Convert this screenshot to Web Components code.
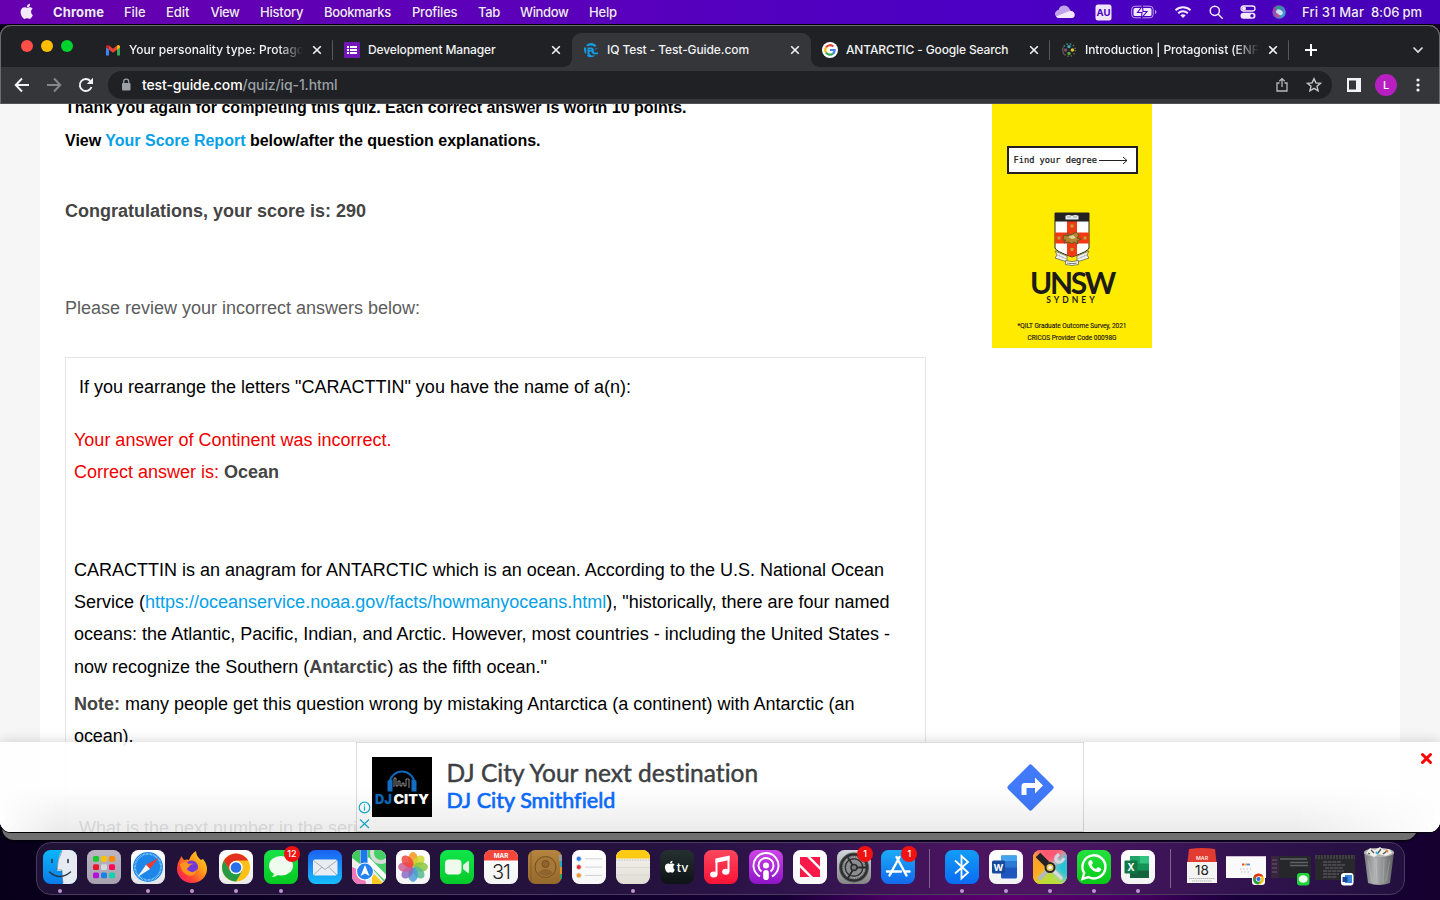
<!DOCTYPE html>
<html lang="en"><head><meta charset="utf-8"><title>IQ Test - Test-Guide.com</title>
<style>html,body{margin:0;width:1440px;height:900px;overflow:hidden;background:#12002b}</style></head>
<body><mac-desktop></mac-desktop>
<script>
function part(name, css, html) {
  customElements.define(name, class extends HTMLElement {
    connectedCallback() {
      if (this.shadowRoot) return;
      this.attachShadow({mode: 'open'}).innerHTML = '<style>*{box-sizing:border-box}' + css + '</style>' + (typeof html === 'function' ? html(this) : html);
    }
  });
}
const apple = 'M13.3 10.6c0-1.7 1.4-2.5 1.5-2.6-.8-1.2-2.1-1.4-2.5-1.4-1.1-.1-2.1.6-2.6.6-.6 0-1.4-.6-2.3-.6C5.200 6.600 3.500 8.100 3.500 11c0 3.100 2.200 6.400 3.900 6.400.8 0 1.200-.5 2.200-.5s1.300.5 2.200.5c1.500 0 2.900-2.700 3.200-3.700-.1 0-1.700-.8-1.700-3.100zM11.700 5.500c.5-.6.8-1.500.7-2.400-.8 0-1.700.5-2.200 1.100-.5.600-.9 1.400-.8 2.300.9.100 1.800-.4 2.300-1z';

part('mac-desktop', `
:host{display:flex;flex-direction:column;position:relative;width:1440px;height:900px;overflow:hidden;
 background:radial-gradient(ellipse 230px 60px at 1010px 900px,#5d006e 0,#4a0063 50%,transparent 100%),linear-gradient(90deg,#08001a 0,#12002f 45%,#1b0040 75%,#150030 100%)}
.behind{position:absolute;left:2px;top:800px;width:1415px;height:40px;border-radius:0 0 12px 12px;background:#6f6f6f;box-shadow:0 1px 3px #000}
menu-bar,browser-window{position:relative}
dock-bar{margin:10px 0 0 36px;position:relative}`,
`<div class="behind"></div><menu-bar></menu-bar><browser-window></browser-window><dock-bar></dock-bar>`);

part('menu-bar', `
:host{display:flex;height:25px;align-items:center;background:linear-gradient(90deg,#6700ae 0,#5b00bb 38%,#4b00c3 68%,#4700b9 100%);border-bottom:1px solid #140028;color:#f3e9fb;font:500 13px/24px Inter,sans-serif;text-shadow:0 1px 2px #0004}
.m{display:flex;margin-left:20px;flex:1}.m b{font-weight:700}svg{display:block}
.g{width:33px;height:24px}
.r{display:flex;align-items:center}`,
`<div class="m"><span class="g"><svg width="16" height="20" viewBox="2 1 15 18" style="margin:1px 0 0 -1px"><path fill="#f3e9fb" d="${apple}"/></svg></span>
<span style="width:71px"><b><fit-text w="51">Chrome</fit-text></b></span><span style="width:42px"><fit-text w="21.500">File</fit-text></span><span style="width:44.500px"><fit-text w="23.500">Edit</fit-text></span><span style="width:49.500px"><fit-text w="29">View</fit-text></span><span style="width:64px"><fit-text w="43.500">History</fit-text></span><span style="width:88px"><fit-text w="67">Bookmarks</fit-text></span><span style="width:66px"><fit-text w="45.500">Profiles</fit-text></span><span style="width:42px"><fit-text w="22">Tab</fit-text></span><span style="width:69px"><fit-text w="48.500">Window</fit-text></span><fit-text w="28">Help</fit-text></div>
<div class="r">
<svg width="20" height="14" viewBox="0 0 20 14"><path fill="#c0a3ea" d="M0 9.500A4 4 0 0 1 3.500 5 5.800 5.800 0 0 1 14.500 4L16 6 3 12.500A4 4 0 0 1 0 9.500z"/><path fill="#f3e9fb" d="M1 11.500L12 7q2-1.500 4-1a4 4 0 0 1 3.700 4A3 3 0 0 1 17 13H4q-2 0-3-1.500z"/></svg>
<svg width="17" height="17" viewBox="0 0 17 17" style="margin:0 18.500px 0 20.500px"><rect x=".5" y=".5" width="16" height="16" rx="2.500" fill="#f0e5fb"/><text x="8.500" y="12.300" font-size="9.500" font-weight="700" fill="#4b00be" text-anchor="middle" style="text-shadow:none">AU</text></svg>
<svg width="26" height="14" viewBox="0 0 26 14"><rect x=".7" y="1.200" width="21.500" height="11.600" rx="3.200" fill="none" stroke="#bd9fe8"/><path d="M24 5v4q1.500-.5 1.500-2T24 5" fill="#bd9fe8"/><rect x="2.500" y="3" width="18" height="8" rx="1.500" fill="#f3e9fb"/><path d="M11.500 1L6.500 7.500h4.500L10.500 13l5.500-6.500h-4z" fill="#f3e9fb" stroke="#4b00be" stroke-width="1.100"/></svg>
<svg width="18" height="14" viewBox="0 0 18 14" style="margin-left:17px"><g fill="none" stroke="#f3e9fb" stroke-width="2"><path d="M1.500 5.200a11 11 0 0 1 15 0M4.200 8.200a7 7 0 0 1 9.600 0"/></g><path fill="#f3e9fb" d="M6.300 10.200q2.700-2 5.400 0L9 13z"/></svg>
<svg width="14" height="14" viewBox="0 0 14 14" style="margin-left:17.500px"><g fill="none" stroke="#f3e9fb" stroke-width="1.500"><circle cx="5.800" cy="5.800" r="4.600"/><path d="M9.200 9.200l4 4" stroke-linecap="round"/></g></svg>
<svg width="16" height="14" viewBox="0 0 16 14" style="margin-left:17px"><rect x="1" y="1" width="14" height="5" rx="2.500" fill="none" stroke="#f3e9fb" stroke-width="1.300"/><circle cx="4" cy="3.500" r="2" fill="#f3e9fb"/><rect x=".5" y="7.700" width="15" height="6" rx="3" fill="#f3e9fb"/><circle cx="12" cy="10.700" r="1.700" fill="#4b00be"/></svg>
<svg width="14" height="14" viewBox="0 0 14 14" style="margin:0 16px 0 16px"><defs><linearGradient id="s" x1="0" y1=".1" x2="1" y2=".9"><stop stop-color="#c23a86"/><stop offset=".45" stop-color="#6a5fc4"/><stop offset="1" stop-color="#25c4d8"/></linearGradient></defs><circle cx="7" cy="7" r="6.700" fill="url(#s)"/><path d="M3 2q5-2.500 8.500 1.500-4 0-5 3z" fill="#17a98c" opacity=".85"/><ellipse cx="7.500" cy="7" rx="3.500" ry="2.600" fill="#e8fffb" opacity=".8" transform="rotate(30 7 7)"/><path d="M2 9.500q3 4 7 3l-3-4z" fill="#e0447a" opacity=".7"/></svg>
<span style="width:69px"><fit-text w="62">Fri 31 Mar</fit-text></span><span style="width:69px"><fit-text w="51">8:06 pm</fit-text></span></div>`);

part('browser-window', `
:host{display:flex;flex-direction:column;height:807px;border-radius:11px;overflow:hidden;background:#fff;box-shadow:0 0 0 1px #000}
.content{height:728px;position:relative;overflow:hidden}
.edge{position:absolute;inset:0;border:1px solid #6b6b70;border-bottom:0;border-radius:11px 11px 0 0;height:79px;pointer-events:none}`,
`<tab-strip></tab-strip><tool-bar></tool-bar><div class="content"><quiz-page></quiz-page><anchor-ad></anchor-ad></div><div class="edge"></div>`);

part('tab-strip', `
:host{display:flex;height:42px;background:#202124;padding-top:8px}
.lights{display:flex;gap:8px;width:94px;padding:7px 0 0 21px}.lights i{width:12px;height:12px;border-radius:50%}
.plus{width:44px;display:flex;justify-content:center;align-items:center}.sp{flex:1}.chev{padding:12px 16px 0 0}svg{display:block}`,
`<div class="lights"><i style="background:#ff4f48"></i><i style="background:#ffbe00"></i><i style="background:#00d32d"></i></div>
<browser-tab label="Your personality type: Protagonist" w="196" fade line><svg width="16" height="16" viewBox="0 0 16 16"><path fill="#4285f4" d="M1 5v8.500h3V7z"/><path fill="#34a853" d="M12 7v6.500h3V5z"/><path fill="#ea4335" d="M4 3.500L8 6.700l4-3.200v4.200L8 10.800 4 7.700z"/><path fill="#c5221f" d="M1 4.500Q1.500 2 4 3.500v4.200L1 5.500z"/><path fill="#fbbc04" d="M15 4.500Q14.500 2 12 3.500v4.200l3-2.200z"/></svg></browser-tab>
<browser-tab label="Development Manager" w="127.500"><svg width="16" height="16"><rect width="16" height="16" rx="1" fill="#7216b8"/><path d="M3 5h2M3 8h2M3 11h2M6 5h7M6 8h7M6 11h7" stroke="#fff" stroke-width="1.900"/></svg></browser-tab>
<browser-tab label="IQ Test - Test-Guide.com" w="142" active><svg width="16" height="16" viewBox="0 0 16 16"><path fill="#159ce4" d="M3 3.200Q8-1.200 13.500 3.500L12 5Q8.500 2.500 4.500 4.200zM1 5.500h2.200v6H2Q.8 9 1 5.500zM4.500 5.500h4.300q2.700.8 1.200 3-1 1.200-3.500 1V12h-2zm2 1.500v1q2 0 2-.5T6.500 7zM15.500 6.500h-3q-3 1.500-1 4h4l-.8 1.700h-4q-3-1.500-2.200-4zM4 13l2-1.500 2.500 2h4Q9 16.500 4.500 14.500z"/></svg></browser-tab>
<browser-tab label="ANTARCTIC - Google Search" w="162.500" line><svg width="16" height="16" viewBox="0 0 16 16"><circle cx="8" cy="8" r="8" fill="#fff"/><g fill="none" stroke-width="2.200"><path stroke="#ea4335" d="M4 5.500a4.700 4.700 0 0 1 7.300-1"/><path stroke="#fbbc05" d="M4 10.500a4.700 4.700 0 0 1 0-5"/><path stroke="#34a853" d="M11 11.600a4.700 4.700 0 0 1-7-1.100"/><path stroke="#4285f4" d="M8 8h4.700a4.500 4.500 0 0 1-1.700 3.600"/></g></svg></browser-tab>
<browser-tab label="Introduction | Protagonist (ENFJ)" w="184" fade line><svg width="16" height="16" viewBox="0 0 16 16"><circle cx="8" cy="8" r="6.300" fill="none" stroke="#5f7440" stroke-width="1.500" stroke-dasharray="1.300 2"/><path d="M3 4.500a6.300 6.300 0 0 1 9-1" fill="none" stroke="#29858a" stroke-width="1.500" stroke-dasharray="1.300 2"/><path d="M3 12a6.300 6.300 0 0 1-.5-7" fill="none" stroke="#84506e" stroke-width="1.500" stroke-dasharray="1.300 2"/><circle cx="8" cy="4.600" r="1.700" fill="#35a7ad"/><circle cx="8" cy="11.400" r="1.700" fill="#5ca33b"/><circle cx="4.600" cy="8" r="1.700" fill="#84506e"/><circle cx="11.400" cy="8" r="1.700" fill="#e4c62c"/></svg></browser-tab>
<div class="plus"><svg width="14" height="14"><path d="M7 1v12M1 7h12" stroke="#fff" stroke-width="2"/></svg></div><div class="sp"></div>
<div class="chev"><svg width="12" height="10"><path d="M1.500 2.500L6 7l4.500-4.500" fill="none" stroke="#dfe1e5" stroke-width="1.700"/></svg></div>`);

part('browser-tab', `
:host{display:flex;width:239px;height:34px;align-items:center;padding-left:11px;position:relative;color:#f1f3f4;font:500 12px/16px Inter,sans-serif;border-radius:9px 9px 0 0}
:host([active]){background:#35363a}
:host([active])::before,:host([active])::after{content:"";position:absolute;bottom:0;width:8px;height:8px}
:host([active])::before{left:-8px;background:radial-gradient(circle at 0 0,transparent 7.500px,#35363a 8px)}
:host([active])::after{right:-8px;background:radial-gradient(circle at 100% 0,transparent 7.500px,#35363a 8px)}
:host([line]){background:linear-gradient(#55575b,#55575b) right 0 top 7px/1px 20px no-repeat}
.t{width:174px;margin-left:8px;overflow:hidden;white-space:nowrap}:host([fade]) .t{-webkit-mask:linear-gradient(90deg,#000 86%,transparent)}
svg{display:block;margin-left:9px}.i{width:16px;height:16px}`,
h => `<span class="i"><slot></slot></span><div class="t"><fit-text w="${h.getAttribute('w')}">${h.getAttribute('label')}</fit-text></div><svg width="10" height="10"><path d="M1.200 1.200l7.600 7.600M8.800 1.200L1.200 8.800" stroke="#f1f3f4" stroke-width="1.600"/></svg>`);

part('tool-bar', `
:host{display:flex;height:37px;background:#35363a;align-items:center;padding:0 0 1px 14px;border-bottom:1px solid #515257}
svg{display:block}.nav{display:flex;gap:16px;width:94px}
.omni{display:flex;align-items:center;width:1224px;height:28px;border-radius:14px;background:#202124;padding:0 10px 0 12px;font:500 14px/28px Inter,sans-serif;color:#9aa0a6}
.omni b{font-weight:500;color:#fff}.u{margin-left:10px;flex:1}
.me{width:22px;height:22px;border-radius:50%;background:#b81fc0;color:#fff;font:500 11px/22px Inter,sans-serif;text-align:center;margin:0 20px 0 14px}`,
`<div class="nav"><svg width="16" height="16"><path d="M15 8H2M8 1.500L1.700 8 8 14.500" fill="none" stroke="#f1f3f4" stroke-width="1.900"/></svg><svg width="16" height="16"><path d="M1 8h13M8 1.500L14.300 8 8 14.500" fill="none" stroke="#85878a" stroke-width="1.900"/></svg><svg width="16" height="16"><path d="M13.500 10A6 6 0 1 1 12.300 4" fill="none" stroke="#f1f3f4" stroke-width="1.900"/><path d="M15 .8V7H8.800z" fill="#f1f3f4"/></svg></div>
<div class="omni"><svg width="12" height="14"><rect x="2" y="5" width="8.500" height="7.500" rx="1" fill="#9aa0a6"/><path d="M3.700 5.500V3.600a2.500 2.500 0 0 1 5 0v1.900" fill="none" stroke="#9aa0a6" stroke-width="1.300"/></svg>
<span class="u"><fit-text w="195.500"><b>test-guide.com</b>/quiz/iq-1.html</fit-text></span>
<svg width="14" height="16"><path d="M4.500 6H2v8h10V6H9.500M7 10V2M4.300 4.300L7 1.600l2.700 2.700" fill="none" stroke="#b5b8bc" stroke-width="1.300"/></svg>
<svg width="16" height="16" viewBox="0 0 16 16" style="margin-left:17px"><path d="M8 1.700l1.900 4.200 4.600.4-3.500 3 1.100 4.500L8 11.400l-4.100 2.400L5 9.300l-3.500-3 4.600-.4z" fill="none" stroke="#c3c6ca" stroke-width="1.400"/></svg></div>
<svg width="14" height="14" style="margin-left:15px"><path fill="#f1f3f4" fill-rule="evenodd" d="M0 0h14v14H0zM2 2.500h7v9H2z"/></svg><div class="me">L</div><svg width="4" height="14" style="margin-left:-1px"><g fill="#f1f3f4"><circle cx="2" cy="2" r="1.600"/><circle cx="2" cy="7" r="1.600"/><circle cx="2" cy="12" r="1.600"/></g></svg>`);

part('quiz-page', `
:host{display:flex;width:1440px;height:728px;overflow:hidden;background:#f6f6f6;padding:0 40px;font:18px/32.400px "Liberation Sans",Arial,sans-serif;color:#000}
.col{width:1360px;display:flex;background:#fff;padding-left:25px;gap:66px}.main{width:861px;flex:none}
.intro{font:bold 16px/33px "Liberation Sans",Arial,sans-serif;margin-top:-13px;height:66px}a{color:#05a1e8}
.score{font-weight:bold;color:#444;margin-top:38px}.rev{color:#5c5c5c;margin-top:64.600px}
.box{border:1px solid #e6e6e6;margin-top:32.600px;height:441.600px;padding:13px 8px 0}.q{padding-left:5px}.red{color:#f00000;margin-top:20.500px}b{color:#444}.ex{margin-top:64.800px}.note{margin-top:4.500px}
.box+.box{margin-top:-1px}`,
`<div class="col"><div class="main"><div class="intro"><div><fit-text w="621.500">Thank you again for completing this quiz. Each correct answer is worth 10 points.</fit-text></div><div><fit-text w="475.500">View <a>Your Score Report</a> below/after the question explanations.</fit-text></div></div>
<div class="score"><fit-text w="301">Congratulations, your score is: 290</fit-text></div>
<div class="rev"><fit-text w="355">Please review your incorrect answers below:</fit-text></div>
<div class="box"><div class="q"><fit-text w="552">If you rearrange the letters "CARACTTIN" you have the name of a(n):</fit-text></div>
<div class="red"><fit-text w="317.500">Your answer of Continent was incorrect.</fit-text><br><fit-text w="205">Correct answer is: <b>Ocean</b></fit-text></div>
<div class="ex"><fit-text w="810">CARACTTIN is an anagram for ANTARCTIC which is an ocean. According to the U.S. National Ocean</fit-text><br><fit-text w="815.500">Service (<a>https://oceanservice.noaa.gov/facts/howmanyoceans.html</a>), "historically, there are four named</fit-text><br><fit-text w="816">oceans: the Atlantic, Pacific, Indian, and Arctic. However, most countries - including the United States -</fit-text><br><fit-text w="473">now recognize the Southern (<b>Antarctic</b>) as the fifth ocean."</fit-text></div>
<div class="note"><fit-text w="780.500"><b>Note:</b> many people get this question wrong by mistaking Antarctica (a continent) with Antarctic (an</fit-text><br><fit-text w="59.500">ocean).</fit-text></div></div>
<div class="box"><div class="q"><fit-text w="307">What is the next number in the series?</fit-text></div></div></div>
<unsw-ad></unsw-ad></div>`);

part('unsw-ad', `
:host{display:flex;flex-direction:column;align-items:center;width:160px;height:244px;background:#ffeb00;color:#1d1a1a;padding-top:42px;font-family:Roboto,sans-serif}
.btn{width:131px;height:28px;border:2px solid #231f20;background:#fff;display:flex;align-items:center;padding-left:5px;font:8.700px "DejaVu Sans Mono",monospace;color:#111;-webkit-text-stroke:.2px}
svg{display:block}.crest{margin-top:38px}.n{font:700 30px/24px Lato,sans-serif;margin-top:3px}.s{font:700 8.500px/10px Lato,sans-serif;margin-top:1px}
.f{font-size:6.500px;line-height:12px;text-align:center;margin-top:14.500px;font-weight:400;-webkit-text-stroke:.15px}`,
`<div class="btn"><fit-text w="83.500">Find your degree</fit-text><svg width="30" height="9" style="margin-left:2px"><path d="M0 4.500h28M24 1l4 3.500L24 8" fill="none" stroke="#222"/></svg></div>
<svg class="crest" width="36" height="55" viewBox="0 0 36 55"><path d="M1 1h34v35q0 3-17 9Q1 39 1 36z" fill="#fff" stroke="#222"/><path d="M13 9h10v34l-5 2-5-2zM1 20.500h34v11H1z" fill="#ef3a13"/><path d="M1 1h34v8.500H1z" fill="#222"/><path d="M11.500 7.500V3.700q3-1.500 6.500 0 3.500-1.500 6.500 0v3.800z" fill="#e8eef0"/><path d="M13 5h4M19 5h4" stroke="#777" stroke-width=".7"/><g fill="#c0a536"><path d="M16.500 12.500h3v3h-3zM16.500 36h3v3h-3zM3.500 24.500h3v3h-3zM29.500 24.500h3v3h-3z"/></g><path d="M10 23l5 1-2-3 4 2 5-3 3 3-2 3 4 1-4 2 1 3-4-2-2 2-3-2-5 1 2-3-3 0z" fill="#b2852e" stroke="#50502d" stroke-width=".8"/><path d="M14 25l4 2 4-1-3-3z" fill="#ddd49c"/><g fill="#edf2ed" stroke="#555" stroke-width=".7"><path d="M1 39l12 5v6L1 46l2-3zM35 39l-12 5v6l12-4-2-3z"/><path d="M11.500 48.500q6.500 2 13 0v4q-6.500 2-13 0z"/></g><path d="M3.500 43l8 3.500M32.500 43l-8 3.500M13 51q5 1 10 0" stroke="#888" stroke-dasharray="1 .6"/></svg>
<div class="n"><fit-text w="85">UNSW</fit-text></div><div class="s"><fit-text w="50">SYDNEY</fit-text></div>
<div class="f"><fit-text w="109">*QILT Graduate Outcome Survey, 2021</fit-text><br><fit-text w="89">CRICOS Provider Code 00098G</fit-text></div>`);

part('anchor-ad', `
:host{display:flex;position:absolute;left:0;bottom:0;width:1440px;height:90px;justify-content:center;background:#ffffffe4;box-shadow:0 0 12px #0000002e}
:host::after{content:"";position:absolute;inset:45px 0 0;background:linear-gradient(#0000,#00000014);-webkit-mask:linear-gradient(90deg,transparent,#000 4%,#000 90%,transparent)}
.ad{display:flex;width:728px;height:90px;border:1px solid #dcdcdc;background:#fff;align-items:center;font-family:Lato,sans-serif}
svg{display:block}.mk{align-self:flex-end;width:15px}.tx{margin:-2px 0 0 14.500px;width:560.500px}.h{font-size:24.500px;line-height:29px;color:#3c4043;-webkit-text-stroke:.45px}.l{font-size:21.500px;line-height:27px;color:#0b6cff;-webkit-text-stroke:.65px}
.x{position:absolute;right:7px;top:10px}`,
`<div class="ad"><svg class="mk" width="15" height="30" viewBox="0 0 15 30"><g fill="none" stroke="#18afd0" stroke-width="1.200"><circle cx="7.500" cy="6.500" r="5.300"/><path d="M7.500 5.500v4M7.500 3.200v1.300M3 18.500l9 8.500M12 18.500L3 27"/></g></svg>
<svg width="60" height="60"><rect width="60" height="60" fill="#000"/><path d="M17.500 25.500a12.600 12.600 0 0 1 25 0" fill="none" stroke="#0d66b8" stroke-width="2"/><path d="M15.500 24q1-2 5-1.500v12h-5zM44.500 24q-1-2-5-1.500v12h5z" fill="#126fc3"/><path d="M22 30v-9h2v8h2v-5h2v5h2v-3h2v3h2v-7h3v9" fill="none" stroke="#aaa" stroke-width=".8"/><g font-family="Inter,sans-serif" font-weight="900" font-size="13.500"><text x="3" y="46.700" fill="#0d67b8" textLength="17" lengthAdjust="spacingAndGlyphs">DJ</text><text x="21.500" y="46.700" fill="#fff" textLength="35.500" lengthAdjust="spacingAndGlyphs">CITY</text></g></svg>
<div class="tx"><div class="h"><fit-text w="312.500">DJ City Your next destination</fit-text></div><div class="l"><fit-text w="168.500">DJ City Smithfield</fit-text></div></div>
<svg width="47" height="47" viewBox="0 0 47 47"><path d="M21.800 1.200a2.400 2.400 0 0 1 3.400 0l20.600 20.600a2.400 2.400 0 0 1 0 3.400L25.200 45.800a2.400 2.400 0 0 1-3.400 0L1.200 25.200a2.400 2.400 0 0 1 0-3.400z" fill="#4079fa"/><path d="M14.500 31V22q0-3 3-3H28v-5.500l8 8-8 8V24h-8.500v7z" fill="#fff"/></svg></div>
<svg class="x" width="13" height="13"><path d="M2.500 2.500l8 8M10.500 2.500l-8 8" stroke="#f00" stroke-width="3" stroke-linecap="round"/></svg>`);

part('dock-icon', `
:host{display:flex;flex-direction:column;align-items:center;width:44.100px;height:51px;padding-top:7px;position:relative}
.b{position:absolute;top:3px;left:25.500px;width:16px;height:16px;border-radius:50%;background:#f11212;color:#fff;font:500 9px/16px Inter,sans-serif;text-align:center}
.d{width:4px;height:4px;border-radius:50%;background:#bd96d3;margin-top:4px}::slotted(svg){display:block;overflow:visible}`,
h => `<slot></slot>${h.hasAttribute('open') ? '<i class="d"></i>' : ''}${h.hasAttribute('n') ? `<span class="b">${h.getAttribute('n')}</span>` : ''}`);

const grad = (id, a, b) => `<defs><linearGradient id="${id}" x2="0" y2="1"><stop stop-color="${a}"/><stop offset="1" stop-color="${b}"/></linearGradient></defs>`;
let seq = 0;
// App tile: rounded 34px square with a vertical gradient, optional running dot and badge.
const app = (a, b, art, attr = '') => { const id = 'g' + seq++; return `<dock-icon ${attr}><svg width="34" height="35" viewBox="0 0 34 35">${grad(id, a, b)}<clipPath id="c${id}"><rect width="34" height="34" rx="7.500"/></clipPath><g clip-path="url(#c${id})"><rect width="34" height="34" fill="url(#${id})"/>${art}</g></svg></dock-icon>`; };
const bare = (art, attr = '') => `<dock-icon ${attr}><svg width="40" height="35" viewBox="0 0 40 35">${art}</svg></dock-icon>`;
const chrome = (cx, cy, r) => `<g transform="translate(${cx} ${cy}) scale(${r / 14})"><circle r="14" fill="#fbc117"/><path d="M-12.100-7A14 14 0 0 1 12.100-7H0L-6 3.500z" fill="#e3301f"/><path d="M-12.100-7A14 14 0 0 0 0 14L6.200 3.500-6 3.500z" fill="#269a44"/><circle r="6.800" fill="#fff"/><circle r="5.300" fill="#2a6fe8"/></g>`;
const petals = ['#f7941d', '#cfd62d', '#8cc63f', '#57b893', '#4a9cd8', '#8a6cc0', '#cf5d95', '#f0463c'].map((c, i) => `<ellipse cx="17" cy="9.300" rx="4.800" ry="7.200" fill="${c}" opacity=".85" transform="rotate(${i * 45} 17 17)"/>`).join('');
const pads = ['#19c930', '#f7c400', '#ff8c00', '#e8172d', '#d3d9de', '#ff0a55', '#b111d8', '#1682e8', '#12d1ad'].map((c, i) => `<rect x="${6 + i % 3 * 8}" y="${6 + (i / 3 | 0) * 8.200}" width="6" height="5.800" rx="1.500" fill="${c}"/>`).join('');
const ticks = [0, 1, 2].map(i => `<circle cx="6.800" cy="${8.800 + i * 8.300}" r="2.500" fill="${['#1e7ef5', '#ec2a30', '#f59a1b'][i]}" stroke="#ddd"/><path d="M13 ${8.800 + i * 8.300}h17" stroke="#c8c8c8" stroke-width=".8"/>`).join('');
const bubble = '<ellipse cx="17" cy="15.800" rx="12" ry="9.800" fill="#eefbee"/><path d="M10 22q0 4-2.500 5 5 0 7-3z" fill="#e5f6e5"/>';
const sans = 'font-family="Inter,sans-serif" text-anchor="middle"';

part('dock-bar', `
:host{display:flex;width:1369px;height:53px;border:1px solid #4d3a60;border-radius:15px;padding-left:1px;background:linear-gradient(90deg,#211237 0,#25123f 45%,#32144f 57%,#4a145f 68%,#4c1663 75%,#341350 87%,#22103f 100%)}
.sep{width:1px;height:39px;margin:6px 9.500px 0;background:#7f6390}`,
() => [
app('#0bb6fa', '#0a7be8', '<path d="M19 0h15v34H20q-1-6-1-13h-5Q14 8 19 0z" fill="#e6ebf1"/><path d="M9 9.500v3M25 9.500v3" stroke="#263548" stroke-width="1.600" stroke-linecap="round"/><path d="M6.500 22q10 9 21 0" fill="none" stroke="#25364a" stroke-width="1.500" stroke-linecap="round"/><path d="M19 1q-5 9-5 19h5q0 7 1 13" fill="none" stroke="#355a7d" stroke-width=".5"/>', 'open'),
app('#bdb6c2', '#a7a0b0', pads),
app('#fff', '#e2e5e8', '<circle cx="17" cy="17" r="15" fill="#1c87e8"/><circle cx="17" cy="17" r="13" fill="none" stroke="#a9dcf8" stroke-width="2" stroke-dasharray=".6 .8"/><path d="M27.500 8L15 14.800 19 19z" fill="#f03a30"/><path d="M6.500 27L15 14.800 19 19z" fill="#f4f4f4"/>', 'open'),
bare('<defs><linearGradient id="ff" x1="1" x2="0" y2="1"><stop stop-color="#ffe226"/><stop offset=".4" stop-color="#ff9a18"/><stop offset=".7" stop-color="#ff4134"/><stop offset="1" stop-color="#f4137b"/></linearGradient></defs><path d="M5 18q0-5 3-9 1-1 1-3l3 4q3-1 5 0Q19 4 24 1q0 5 5 9l2-1q4 5 4 10a15 14 0 0 1-30 0z" fill="url(#ff)"/><circle cx="19.500" cy="17" r="6.500" fill="#7437d9"/><path d="M8 14q5-4 9 0 3-1 5 0-4 0-5 3-4 2 0 4 5 3 8-2-2 9-10 6-6-3-7-11z" fill="#ff951c"/>', 'open'),
app('#fff', '#ebebeb', chrome(17, 17.500, 14), 'open'),
app('#19e24a', '#05c921', bubble, 'open n="12"'),
app('#1b62f0', '#16bdfc', '<rect x="5" y="9.500" width="24.500" height="16" rx="2" fill="#e9edf1"/><path d="M5.500 10.500L17 19.500l12-9M5.500 25l8.500-8M29 25l-8.500-8" fill="none" stroke="#9aa5b0" stroke-width=".9"/>'),
app('#f0efe6', '#eee', '<path d="M0 0h8v14L0 8z" fill="#43c860"/><path d="M16 0h18v34L16 14z" fill="#44cf67"/><path d="M0 17l12 5 2 12H0z" fill="#ee79b9"/><path d="M15 9l19 19" stroke="#fff" stroke-width="5"/><path d="M20 22l12 12H20z" fill="#ffc91f"/><circle cx="29" cy="3" r="9" fill="none" stroke="#d7ddd7" stroke-width="4"/><path d="M8.500 0h7v22h-7z" fill="#1c79e8"/><circle cx="13" cy="21.500" r="8.500" fill="#2383f1" stroke="#fff" stroke-width="1.200"/><path d="M13 15l4.500 11-4.500-2.500L8.500 26z" fill="#fff"/>'),
app('#fff', '#f4f4f4', petals),
app('#10e64b', '#05c92a', '<rect x="5" y="9.500" width="16.500" height="15" rx="4" fill="#eefaec"/><path d="M23 15l5-4q1-.5 1 1v10q0 1.500-1 1l-5-4z" fill="#e3f2e2"/>'),
app('#fff', '#f3f3f3', `<path d="M0 0h34v10.500H0z" fill="#f5463c"/><text x="17" y="8" font-size="6.300" font-weight="700" fill="#fff" ${sans}>MAR</text><text x="17" y="28.500" font-size="20" font-weight="300" letter-spacing="-1" fill="#222" ${sans}>31</text>`),
app('#b5853f', '#95692c', '<path d="M31 5h3v6h-3z" fill="#999"/><path d="M32 11h2v6h-2z" fill="#28a8c8"/><path d="M32 17h2v7h-2z" fill="#e98e24"/><path d="M32 24h2v5h-2z" fill="#27a563"/><circle cx="17.500" cy="17" r="10.500" fill="#a67737" stroke="#765021" stroke-width="1"/><circle cx="17.500" cy="14" r="3.500" fill="#8e642c" stroke="#765021"/><path d="M10 23q7.500-8 15 0-7 6-15 0" fill="#8e642c"/><path d="M3 1v32" stroke="#765021" stroke-width=".6"/>'),
app('#fff', '#f7f7f7', ticks),
app('#f7f5f0', '#e1ddd5', '<path d="M0 0h34v8.500H0z" fill="#ffcb12"/><path d="M0 10h34" stroke="#999" stroke-width=".8" stroke-dasharray=".6 1"/><path d="M0 17.500h34M0 25h34" stroke="#d3d0ca" stroke-width=".6"/>', 'open'),
app('#24302f', '#0e1315', `<g transform="translate(2 8) scale(.85)"><path d="${apple}" fill="#fff"/></g><text x="22.500" y="21.500" font-size="12.500" font-weight="500" fill="#fff" ${sans}>tv</text>`),
app('#fb465c', '#f91336', '<path d="M12.500 9.500v14.500M24.500 6.500V21" stroke="#fff" stroke-width="2"/><path d="M11.500 8.500L25.500 5.500v4.500l-14 3z" fill="#fff"/><ellipse cx="9.800" cy="24.500" rx="3.700" ry="3" fill="#fff"/><ellipse cx="21.800" cy="21.700" rx="3.700" ry="3" fill="#fff"/>'),
app('#cd45e8', '#8e15c8', '<g fill="none" stroke="#fff" stroke-width="1.900"><path d="M11 26.500a12.500 12.500 0 1 1 12 0"/><path d="M12.500 21.500a7.500 7.500 0 1 1 9 0"/></g><circle cx="17" cy="15.500" r="3" fill="#fff"/><rect x="14.200" y="20" width="5.600" height="10" rx="2.800" fill="#fff"/>'),
app('#fff', '#f7f7f7', '<path d="M7 7h7l13 13v7h-7L7 14z" fill="#fa1848"/><path d="M17.500 7H27v9.500z" fill="#fa1848"/><path d="M7 17.500V27h9.500z" fill="#fa1848"/>'),
app('#d2d7dc', '#858585', '<circle cx="17" cy="17.500" r="15" fill="#55585a"/><circle cx="17" cy="17.500" r="13" fill="none" stroke="#2b2d2f" stroke-width="2"/><circle cx="17" cy="17.500" r="10.500" fill="#8b8e90" stroke="#a5a5a5" stroke-width="2" stroke-dasharray="1 .7"/><circle cx="17" cy="17.500" r="8.800" fill="none" stroke="#333" stroke-width="1.500"/><circle cx="17" cy="17.500" r="3" fill="#777" stroke="#2b2b2b" stroke-width="1.500"/><path d="M20 17.500h9M15.500 20.500l-4.500 7.500M15.500 15l-4.500-7.500" stroke="#2b2b2b" stroke-width="1.800"/>', 'n="1"'),
app('#1aacf8', '#1468ec', '<path d="M18.500 7l-10 18.500M15.500 7l10 18.500" stroke="#fff" stroke-width="2.400" stroke-linecap="round"/><path d="M6 21.500h14M24.500 21.500h4" stroke="#fff" stroke-width="2.400" stroke-linecap="round"/>', 'n="1"'),
'<div class="sep"></div>',
app('#119df7', '#0b6bf2', '<path d="M10 10.500l13 12-6.500 6V6l6.500 6-13 11.500" fill="none" stroke="#fff" stroke-width="1.800"/>', 'open'),
app('#fff', '#f2f2f2', `<rect x="12" y="5.500" width="16" height="23" rx="1.500" fill="#1e57bd"/><path d="M12 5.500h16v6H12z" fill="#42a3ee"/><path d="M12 11.500h16v6H12z" fill="#2b79d3"/><rect x="3" y="10.500" width="13" height="13" rx="1.500" fill="#174a9c"/><text x="9.500" y="20.600" font-size="9.500" font-weight="700" fill="#fff" ${sans}>W</text>`, 'open'),
app('#ff8b31', '#fae21c', '<defs><filter id="bl"><feGaussianBlur stdDeviation="3"/></filter></defs><g filter="url(#bl)"><path d="M17 17L38-4v42z" fill="#22c4d7"/><path d="M17 17L-4-4h42z" fill="#ff5774"/><path d="M17 17L-4-4v42z" fill="#ffa624"/><path d="M17 17L-4 38h42z" fill="#b9dc39"/></g><path d="M5 5l9 9" stroke="#212126" stroke-width="6.500"/><path d="M18 18l10 10" stroke="#d9d9dd" stroke-width="3.500" stroke-linecap="round"/><path d="M7 28L25 10" stroke="#b4b9c0" stroke-width="4" stroke-linecap="round"/><path d="M31 8q-2 5-6 4-5-3 1-8" fill="none" stroke="#d4d8de" stroke-width="3"/><circle cx="17" cy="17.500" r="4.500" fill="#eac95a" stroke="#252525" stroke-width="2"/><circle cx="17" cy="17.500" r="1.800" fill="#fff"/>', 'open'),
app('#24e23e', '#08c818', '<path d="M5.500 29l1.700-6A11.500 11.500 0 1 1 11.500 27z" fill="none" stroke="#fff" stroke-width="2.400"/><path d="M12 11q2-2 3 0l1 2-1.500 2q1.500 3 4.500 4l2-2 3 1.500q1 1-1 3-5 2-10-4-3-4-1-6.500z" fill="#fff"/>', 'open'),
app('#fff', '#f2f2f2', `<rect x="9" y="6" width="19" height="22" rx="1" fill="#139456"/><path d="M18.500 6H28v7.500h-9.500z" fill="#32c481"/><path d="M9 6h9.500v7.500H9z" fill="#20a366"/><path d="M9 20.500h19V28H9z" fill="#14633c"/><rect x="3.500" y="10.500" width="13" height="13" rx="1" fill="#0f7745"/><text x="10" y="20.600" font-size="10" font-weight="700" fill="#fff" ${sans}>X</text>`, 'open'),
'<div class="sep"></div>',
bare(`<path d="M7-1q13-2 26 0l1.500 13h-29z" fill="#e23b32"/><path d="M5 12h30v21H5z" fill="#f4f4f2"/><text x="20" y="10" font-size="5.300" font-weight="600" fill="#ffe3df" ${sans}>MAR</text><text x="20" y="25" font-size="13.500" fill="#222" ${sans}>18</text><path d="M7 28.500h26M10 31h20" stroke="#999" stroke-width=".7" stroke-dasharray="1.500 .5"/>`),
bare(`<path d="M0 6h40v22H0z" fill="#fafafa"/><path d="M0 6h40v1H0z" fill="#d3bcd7"/><path d="M16 14.500h2" stroke="#e44" stroke-width="1.800"/><path d="M18 14.500h2.500" stroke="#efb92c" stroke-width="1.800"/><path d="M20.500 14.500H24" stroke="#478bef" stroke-width="1.800"/><path d="M14 19h12M15 22h9" stroke="#bbb" stroke-dasharray="1.300 2"/><rect x="26" y="23" width="13" height="12" rx="3" fill="#fff"/>${chrome(32.500, 29, 5.500)}`),
bare('<path d="M0 6h40v22H0z" fill="#26272b"/><path d="M0 6h8v22H0z" fill="#37263e"/><path d="M9 9h27M19 12.500h18M19 15.500h18" stroke="#616267" stroke-width="1.300"/><path d="M1 10h5M1 14h5M1 18h5M1 22h5" stroke="#6c5b71" stroke-width="1"/><rect x="26" y="23" width="12.500" height="12.500" rx="3" fill="#1fd43b"/><ellipse cx="32.200" cy="29" rx="4.500" ry="3.800" fill="#eefaf0"/>'),
bare('<path d="M0 5h40v25H0z" fill="#29292d"/><path d="M0 6h40M0 8h40" stroke="#55555a" stroke-dasharray="2 1"/><path d="M8 12h18M8 15h22M10 18h18M8 21h21M8 24h16M8 27h14" stroke="#77777b" stroke-width=".8" stroke-dasharray="4 .6"/><rect x="26" y="23" width="12.500" height="12.500" rx="3" fill="#fff"/><rect x="30" y="25" width="7" height="8" fill="#3688df"/><rect x="27.500" y="27" width="5" height="5" fill="#174a9c"/>'),
bare('<defs><linearGradient id="tr"><stop stop-color="#77797b"/><stop offset=".35" stop-color="#b0b2b4"/><stop offset=".7" stop-color="#888a8c"/><stop offset="1" stop-color="#5c5e60"/></linearGradient></defs><path d="M5 2h30l-4 31q-11 4-22 0z" fill="url(#tr)"/><ellipse cx="20" cy="2.500" rx="15" ry="4.500" fill="#b5b5b3"/><path d="M7 3l4-5 5 2 5-3 4 3 5-1 3 4-6 3-7-2-5 3z" fill="#f0efea"/><path d="M12 0l3 3M22-1l-3 4M28 1l-4 3M9 3l2 1" stroke="#555" stroke-width="1.300"/><path d="M17 2l2 2" stroke="#25b4d0" stroke-width="2"/><path d="M27 0l2 2" stroke="#d48643" stroke-width="2"/><path d="M9 10l4 22M17 9l1 24M25 9l-1 24M31 10l-4 21" stroke="#fff" stroke-width=".7" opacity=".25"/>')
].join(''));

// Spaces its letters so that the run of text spans the width given in "w".
customElements.define('fit-text', class extends HTMLElement {
  connectedCallback() {
    if (this.shadowRoot) return;
    this.attachShadow({mode: 'open'}).innerHTML = '<style>:host{display:inline-block;white-space:nowrap;width:max-content;vertical-align:baseline}</style><slot></slot>';
    const natural = this.getBoundingClientRect().width;
    const n = this.textContent.length;
    this.style.letterSpacing = ((+this.getAttribute('w') - natural) / (n - .5)).toFixed(4) + 'px';
  }
});
</script></body></html>
